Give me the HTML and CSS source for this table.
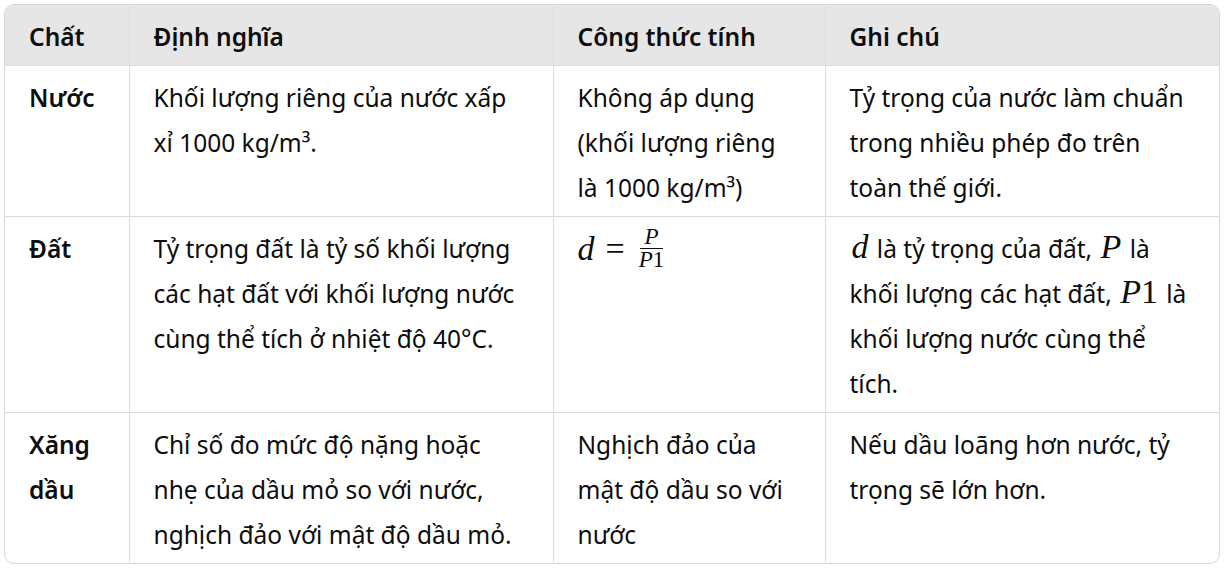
FILE: index.html
```html
<!DOCTYPE html>
<html lang="vi">
<head>
<meta charset="utf-8">
<link rel="stylesheet" href="styles.css">
</head>
<body>
<div class="wrap">
<table class="tbl">
<colgroup>
<col class="c1"><col class="c2"><col class="c3"><col class="c4">
</colgroup>
<thead>
<tr><th>Chất</th><th>Định nghĩa</th><th>Công thức tính</th><th>Ghi chú</th></tr>
</thead>
<tbody>
<tr>
<td class="name">Nước</td>
<td>Khối lượng riêng của nước xấp xỉ 1000 kg/m³.</td>
<td>Không áp dụng (khối lượng riêng là 1000 kg/m³)</td>
<td>Tỷ trọng của nước làm chuẩn trong nhiều phép đo trên toàn thế giới.</td>
</tr>
<tr>
<td class="name">Đất</td>
<td>Tỷ trọng đất là tỷ số khối lượng các hạt đất với khối lượng nước cùng thể tích ở nhiệt độ 40°C.</td>
<td><span class="math"><i class="md">d</i><span class="eq">=</span><span class="frac"><span class="num"><i>P</i></span><span class="den"><i>P</i>1</span></span></span></td>
<td><span class="mi">d</span> là tỷ trọng của đất, <span class="mi">P</span> là<br>khối lượng các hạt đất, <span class="mi">P<span class="up">1</span></span> là<br>khối lượng nước cùng thể tích.</td>
</tr>
<tr>
<td class="name">Xăng dầu</td>
<td>Chỉ số đo mức độ nặng hoặc nhẹ của dầu mỏ so với nước, nghịch đảo với mật độ dầu mỏ.</td>
<td>Nghịch đảo của mật độ dầu so với nước</td>
<td>Nếu dầu loãng hơn nước, tỷ trọng sẽ lớn hơn.</td>
</tr>
</tbody>
</table>
</div>
</body>
</html>
```
FILE: styles.css
```css
html, body { margin: 0; padding: 0; background: #fff; }
body { padding: 4px 0 0 4px; font-family: "Noto Sans", "Open Sans", sans-serif; color: #0d0d0d; }
.wrap {
  width: 1214px;
  border: 1px solid #d6d6d6;
  border-radius: 10px;
  overflow: hidden;
}
.tbl { border-collapse: collapse; table-layout: fixed; width: 100%; font-size: 24.5px; line-height: 45px; }
.c1 { width: 124px; }
.c2 { width: 424px; }
.c3 { width: 272px; }
.c4 { width: auto; }
th, td {
  text-align: left;
  vertical-align: top;
  padding: 9px 23px 6px 24px;
  border-left: 1px solid #dcdcdc;
  border-top: 1px solid #dcdcdc;
}
th:first-child, td:first-child { border-left: none; }
thead th { border-top: none; background: #e6e6e6; font-weight: 600; }
td.name { font-weight: 600; }
.math { font-family: "Liberation Serif", serif; font-size: 34px; display: inline-flex; align-items: center; vertical-align: top; height: 45px; line-height: 1; }
.math i, .mi { font-family: "Liberation Serif", serif; font-style: italic; }
.md { padding-right: 3px; }
.eq { font-style: normal; margin: 0 11px 0 8px; }
.frac { display: inline-flex; flex-direction: column; align-items: center; font-size: 23px; line-height: 22px; }
.num { padding: 0 4px; border-bottom: 1px solid #0d0d0d; }
.den { padding: 0 3px; }
.mi { font-size: 34px; line-height: 1; margin: 0 2px; }
.up { font-style: normal; }
```
